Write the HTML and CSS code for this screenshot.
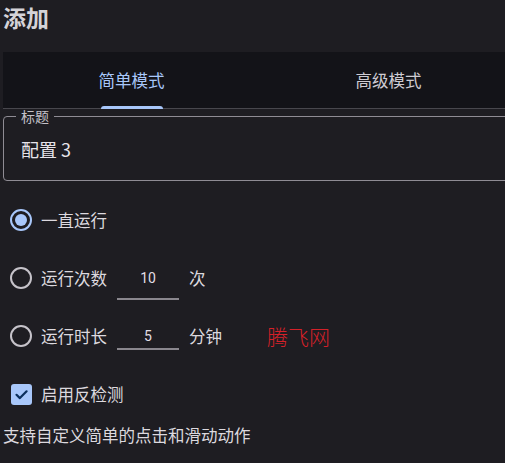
FILE: index.html
```html
<!DOCTYPE html>
<html lang="zh-CN">
<head>
<meta charset="utf-8">
<title>添加</title>
<link rel="stylesheet" href="styles.css">
</head>
<body>
<div class="page">
  <h1 class="title">添加</h1>
  <div class="tabs">
    <div class="tab active">简单模式<span class="indicator"></span></div>
    <div class="tab">高级模式</div>
  </div>
  <fieldset class="field">
    <legend class="field-label">标题</legend>
    <div class="field-value">配置 3</div>
  </fieldset>
  <div class="options">
    <div class="row">
      <span class="radio checked"><span class="dot"></span></span>
      <span class="label">一直运行</span>
    </div>
    <div class="row">
      <span class="radio"></span>
      <span class="label">运行次数</span>
      <span class="num num-tall">10</span>
      <span class="unit">次</span>
    </div>
    <div class="row">
      <span class="radio"></span>
      <span class="label">运行时长</span>
      <span class="num">5</span>
      <span class="unit">分钟</span>
      <span class="watermark">腾飞网</span>
    </div>
    <div class="row">
      <span class="checkbox">
        <svg viewBox="0 0 21 21" width="21" height="21"><path d="M5.5 10.8 L8.9 14.1 L15.6 7.3" fill="none" stroke="#0b2f5c" stroke-width="2.2" stroke-linecap="round" stroke-linejoin="round"/></svg>
      </span>
      <span class="label">启用反检测</span>
    </div>
  </div>
  <p class="desc">支持自定义简单的点击和滑动动作</p>
</div>
</body>
</html>
```
FILE: styles.css
```css
html, body {
  margin: 0;
  padding: 0;
  background: #1e1d22;
  overflow: hidden;
}
.page {
  width: 514px;
  padding-left: 3px;
  font-family: "Noto Sans CJK SC", "Noto Sans", sans-serif;
  color: #e4e1e6;
}
.title {
  margin: 0;
  height: 52px;
  line-height: 34px;
  font-size: 23px;
  font-weight: 700;
  color: #d4d3d8;
}
.tabs {
  display: flex;
  height: 56px;
  background: #131318;
  border-bottom: 1px solid #48474d;
}
.tab {
  position: relative;
  flex: 1;
  display: flex;
  align-items: center;
  justify-content: center;
  font-size: 16.5px;
  color: #cfccd3;
}
.tab.active {
  color: #a8c7fa;
}
.indicator {
  position: absolute;
  bottom: -1px;
  left: 50%;
  width: 62px;
  margin-left: -31px;
  height: 3px;
  border-radius: 3px 3px 0 0;
  background: #a8c7fa;
}
.field {
  margin: 0;
  padding: 0 0 0 12px;
  border: 1px solid #8f8c94;
  border-radius: 4px;
  min-width: 0;
}
.field-label {
  padding: 0 5px;
  font-size: 14px;
  line-height: 14px;
  color: #c4c1c8;
}
.field-value {
  padding: 14px 0 19px 5px;
  line-height: 24px;
  font-size: 18px;
  color: #e6e3ea;
}
.options {
  margin-top: 10px;
  display: flex;
  flex-direction: column;
}
.row {
  position: relative;
  height: 58px;
  display: flex;
  align-items: center;
  font-size: 16.5px;
}
.radio {
  box-sizing: border-box;
  margin-left: 7px;
  width: 22px;
  height: 22px;
  border: 2px solid #c6c3ca;
  border-radius: 50%;
  display: flex;
  align-items: center;
  justify-content: center;
}
.radio.checked {
  border-color: #a8c7fa;
}
.dot {
  width: 12px;
  height: 12px;
  border-radius: 50%;
  background: #a8c7fa;
}
.label {
  margin-left: 9px;
  color: #dcd9df;
}
.num {
  box-sizing: border-box;
  margin-left: 10px;
  width: 62px;
  height: 26px;
  display: flex;
  align-items: center;
  justify-content: center;
  border-bottom: 2px solid #8a878e;
  font-family: "Roboto", sans-serif;
  font-size: 14px;
  color: #e2dfe6;
  align-self: flex-start;
  margin-top: 17px;
}
.num-tall {
  height: 43px;
  margin-top: 8px;
}
.unit {
  margin-left: 10px;
  color: #dcd9df;
}
.checkbox {
  margin-left: 8px;
  width: 21px;
  height: 21px;
  border-radius: 3px;
  background: #a8c7fa;
  display: flex;
}
.watermark {
  position: absolute;
  left: 264px;
  top: 14px;
  font-size: 21px;
  font-weight: 300;
  color: #d42129;
  letter-spacing: 0px;
}
.desc {
  margin: 1px 0 0;
  line-height: 22px;
  font-size: 16.5px;
  color: #dcd9df;
}
```
